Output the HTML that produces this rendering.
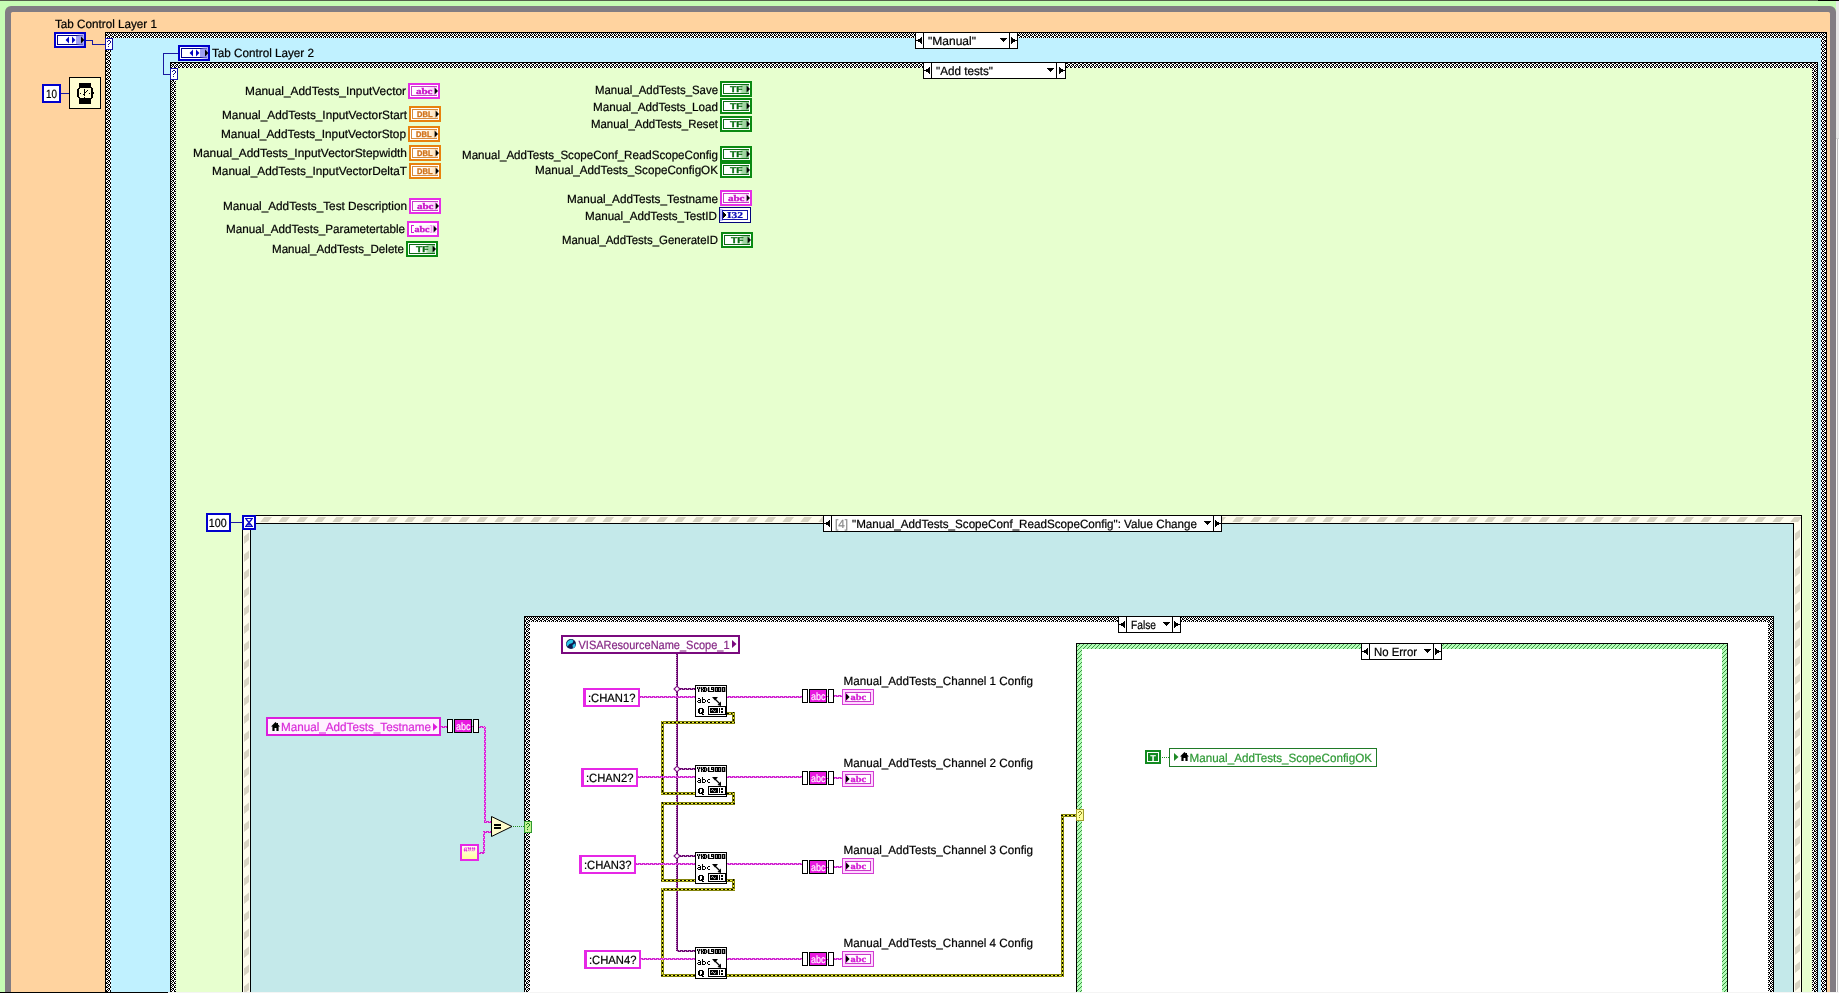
<!DOCTYPE html>
<html><head><meta charset="utf-8"><title>LabVIEW block diagram</title>
<style>
html,body{margin:0;padding:0;background:#c6fdb4;overflow:hidden}
svg{display:block;font-family:"Liberation Sans",sans-serif}
text{white-space:pre}
</style></head>
<body>
<svg width="1839" height="993" viewBox="0 0 1839 993" shape-rendering="crispEdges" text-rendering="geometricPrecision">
<defs>
<filter id="idf" x="0" y="0" width="1839" height="993" filterUnits="userSpaceOnUse" color-interpolation-filters="sRGB"><feOffset dx="0" dy="0"/></filter>
<pattern id="chk" width="4" height="4" patternUnits="userSpaceOnUse">
 <rect width="4" height="4" fill="#fff"/>
 <path d="M0 0h2v1h-2z M1 1h1v1h-1z M3 1h1v1h-1z M0 2h1v1h-1z M2 2h1v1h-1z M2 3h2v1h-2z" fill="#000"/>
</pattern>
<pattern id="evh" x="260" y="516" width="18" height="7" patternUnits="userSpaceOnUse">
 <rect width="18" height="7" fill="#fffdee"/>
 <path d="M4.3 1 L12.1 1 L8 6 L0.3 6 Z" fill="#d8d4c3" shape-rendering="geometricPrecision"/>
</pattern>
<pattern id="evv" x="243" y="532" width="7" height="18" patternUnits="userSpaceOnUse">
 <rect width="7" height="18" fill="#fffdee"/>
 <path d="M1 4.5 L6 0.5 L6 8 L1 12 Z" fill="#d8d4c3" shape-rendering="geometricPrecision"/>
</pattern>
<pattern id="evv2" x="1794" y="529" width="7" height="18" patternUnits="userSpaceOnUse">
 <rect width="7" height="18" fill="#fffdee"/>
 <path d="M1 4.5 L6 0.5 L6 8 L1 12 Z" fill="#d8d4c3" shape-rendering="geometricPrecision"/>
</pattern>
<pattern id="ghat" width="4" height="4" patternUnits="userSpaceOnUse">
 <rect width="4" height="4" fill="#b4fdb8"/>
 <path d="M-1 1 L1 -1 M-1 5 L5 -1 M3 5 L5 3" stroke="#3c9444" stroke-width="1" />
</pattern>
<linearGradient id="gB" x1="0" x2="1"><stop offset="0" stop-color="#fff"/><stop offset="0.7" stop-color="#fff"/><stop offset="0.74" stop-color="#a4a4f2"/><stop offset="1" stop-color="#9a9af0"/></linearGradient>
<linearGradient id="gB2" x1="0" x2="1"><stop offset="0" stop-color="#a0a0f0" stop-opacity="0"/><stop offset="0.5" stop-color="#a0a0f0" stop-opacity="0.55"/><stop offset="1" stop-color="#8c8cf0" stop-opacity="0.75"/></linearGradient>
<linearGradient id="gM" x1="0" x2="1"><stop offset="0" stop-color="#fff"/><stop offset="0.55" stop-color="#fff4ff"/><stop offset="1" stop-color="#ffc0ff"/></linearGradient>
<linearGradient id="gO" x1="0" x2="1"><stop offset="0" stop-color="#fff"/><stop offset="0.55" stop-color="#fffaf0"/><stop offset="1" stop-color="#ffd9a8"/></linearGradient>
<linearGradient id="gG" x1="0" x2="1"><stop offset="0" stop-color="#fff"/><stop offset="0.6" stop-color="#fff"/><stop offset="0.72" stop-color="#a8d8a8"/><stop offset="1" stop-color="#8ccc90"/></linearGradient>
<linearGradient id="gI" x1="0" x2="1"><stop offset="0" stop-color="#a8a8f8"/><stop offset="0.3" stop-color="#c8c8ff"/><stop offset="0.45" stop-color="#fff"/><stop offset="1" stop-color="#fff"/></linearGradient>
<linearGradient id="gMi" x1="0" x2="1"><stop offset="0" stop-color="#f8a0f8"/><stop offset="0.3" stop-color="#ffd0ff"/><stop offset="0.5" stop-color="#fff"/><stop offset="1" stop-color="#fff"/></linearGradient>

<pattern id="sqh" width="4" height="2" patternUnits="userSpaceOnUse">
 <rect width="4" height="2" fill="#f3a6f3"/>
 <rect x="0" y="0" width="3" height="1" fill="#cf22cf"/><rect x="2" y="1" width="2" height="1" fill="#cf22cf"/><rect x="0" y="1" width="1" height="1" fill="#cf22cf"/>
</pattern>
<pattern id="sqv" width="2" height="4" patternUnits="userSpaceOnUse">
 <rect width="2" height="4" fill="#f3a6f3"/>
 <rect x="0" y="0" width="1" height="3" fill="#d927d9"/><rect x="1" y="2" width="1" height="2" fill="#d927d9"/><rect x="1" y="0" width="1" height="1" fill="#d927d9"/>
</pattern>
<pattern id="vqh" width="4" height="2" patternUnits="userSpaceOnUse">
 <rect width="4" height="2" fill="#cfa0d2"/>
 <rect x="0" y="0" width="3" height="1" fill="#6a0870"/><rect x="2" y="1" width="2" height="1" fill="#6a0870"/><rect x="0" y="1" width="1" height="1" fill="#6a0870"/>
</pattern>
<pattern id="vqv" width="2" height="2" patternUnits="userSpaceOnUse">
 <rect x="0" y="0" width="2" height="2" fill="#6a066e"/><rect x="0" y="1" width="1" height="1" fill="#c78ec9"/>
</pattern>
<pattern id="erw" width="4" height="4" patternUnits="userSpaceOnUse">
 <rect width="4" height="4" fill="#f0f03c"/>
 <path d="M0 0h2v1h-2z M3 1h1v1h-1z M0 1h1v1h-1z M2 2h2v1h-2z M1 3h2v1h-2z" fill="#000"/>
</pattern>
<linearGradient id="gY" x1="0" x2="0" y1="0" y2="1"><stop offset="0" stop-color="#fffff2"/><stop offset="1" stop-color="#ffff9c"/></linearGradient>
</defs>
<rect x="0" y="0" width="1839" height="993" fill="#c6fdb4" />
<rect x="0" y="0" width="1839" height="1" fill="#55604c" />
<rect x="1836" y="0" width="3" height="138" fill="#e8e8e8" />
<rect x="1836" y="138" width="3" height="993" fill="#fbfbfb" />
<rect x="1836" y="138" width="3" height="1" fill="#d4d4d4" />
<rect x="1837" y="139" width="1" height="993" fill="#bcbcbc" />
<rect x="1818" y="0" width="21" height="1" fill="#000" />
<rect x="5" y="6" width="1831" height="1000" rx="6" ry="6" fill="#827d83" shape-rendering="geometricPrecision"/>
<rect x="11" y="12" width="1819" height="1000" rx="1.5" ry="1.5" fill="#ffd39f" shape-rendering="geometricPrecision"/>
<rect x="105" y="32" width="1722" height="971" fill="url(#chk)" />
<rect x="105" y="32" width="1722" height="1" fill="#000" />
<rect x="105" y="32" width="1" height="993" fill="#000" />
<rect x="1826" y="32" width="1" height="993" fill="#000" />
<rect x="111" y="38" width="1710" height="993" fill="#c0f1ff" />
<rect x="170" y="62" width="1648" height="941" fill="url(#chk)" />
<rect x="170" y="62" width="1648" height="1" fill="#000" />
<rect x="170" y="62" width="1" height="993" fill="#000" />
<rect x="1817" y="62" width="1" height="993" fill="#000" />
<rect x="176" y="68" width="1636" height="993" fill="#e7ffcf" />
<rect x="242" y="515" width="1560" height="993" fill="#000" />
<rect x="243" y="516" width="1558" height="993" fill="#fffdee" />
<rect x="243" y="516" width="1558" height="7" fill="url(#evh)" />
<rect x="243" y="523" width="7" height="993" fill="url(#evv)" />
<rect x="1794" y="523" width="7" height="993" fill="url(#evv2)" />
<rect x="250" y="523" width="1544" height="993" fill="#000" />
<rect x="251" y="524" width="1542" height="993" fill="#c4e9ea" />
<rect x="524" y="616" width="1250" height="387" fill="url(#chk)" />
<rect x="524" y="616" width="1250" height="1" fill="#000" />
<rect x="524" y="616" width="1" height="993" fill="#000" />
<rect x="1773" y="616" width="1" height="993" fill="#000" />
<rect x="530" y="622" width="1238" height="993" fill="#fff" />
<rect x="1076" y="643" width="652" height="360" fill="url(#ghat)" />
<rect x="1076" y="643" width="652" height="1" fill="#000" />
<rect x="1076" y="643" width="1" height="993" fill="#000" />
<rect x="1727" y="643" width="1" height="993" fill="#000" />
<rect x="1082" y="649" width="640" height="993" fill="#fff" />
<rect x="0" y="992" width="168" height="1" fill="#000" />
<rect x="168" y="992" width="1671" height="1" fill="#f4f4f4" />
<rect x="915" y="32" width="103" height="17" fill="#000" />
<rect x="916" y="33" width="101" height="15" fill="#fff" />
<rect x="923" y="32" width="1" height="17" fill="#000" />
<rect x="1009" y="32" width="1" height="17" fill="#000" />
<path d="M921 37h1v1h-1zM1011 37h1v1h-1zM920 38h2v1h-2zM1011 38h2v1h-2zM918 39h4v1h-4zM1011 39h4v1h-4zM916 40h6v1h-6zM1011 40h6v1h-6zM918 41h4v1h-4zM1011 41h4v1h-4zM920 42h2v1h-2zM1011 42h2v1h-2zM921 43h1v1h-1zM1011 43h1v1h-1z" fill="#000" />
<path d="M1000 38h7v1h-7zM1001 39h5v1h-5zM1002 40h3v1h-3zM1003 41h1v1h-1z" fill="#000" />
<rect x="923" y="62" width="143" height="17" fill="#000" />
<rect x="924" y="63" width="141" height="15" fill="#fff" />
<rect x="931" y="62" width="1" height="17" fill="#000" />
<rect x="1056" y="62" width="1" height="17" fill="#000" />
<path d="M929 67h1v1h-1zM1059 67h1v1h-1zM928 68h2v1h-2zM1059 68h2v1h-2zM926 69h4v1h-4zM1059 69h4v1h-4zM924 70h6v1h-6zM1059 70h6v1h-6zM926 71h4v1h-4zM1059 71h4v1h-4zM928 72h2v1h-2zM1059 72h2v1h-2zM929 73h1v1h-1zM1059 73h1v1h-1z" fill="#000" />
<path d="M1047 68h7v1h-7zM1048 69h5v1h-5zM1049 70h3v1h-3zM1050 71h1v1h-1z" fill="#000" />
<rect x="823" y="515" width="399" height="17" fill="#000" />
<rect x="824" y="516" width="397" height="15" fill="#fff" />
<rect x="831" y="515" width="1" height="17" fill="#000" />
<rect x="1213" y="515" width="1" height="17" fill="#000" />
<path d="M829 520h1v1h-1zM1215 520h1v1h-1zM828 521h2v1h-2zM1215 521h2v1h-2zM826 522h4v1h-4zM1215 522h4v1h-4zM824 523h6v1h-6zM1215 523h6v1h-6zM826 524h4v1h-4zM1215 524h4v1h-4zM828 525h2v1h-2zM1215 525h2v1h-2zM829 526h1v1h-1zM1215 526h1v1h-1z" fill="#000" />
<path d="M1204 521h7v1h-7zM1205 522h5v1h-5zM1206 523h3v1h-3zM1207 524h1v1h-1z" fill="#000" />
<rect x="1118" y="616" width="63" height="17" fill="#000" />
<rect x="1119" y="617" width="61" height="15" fill="#fff" />
<rect x="1126" y="616" width="1" height="17" fill="#000" />
<rect x="1172" y="616" width="1" height="17" fill="#000" />
<path d="M1124 621h1v1h-1zM1174 621h1v1h-1zM1123 622h2v1h-2zM1174 622h2v1h-2zM1121 623h4v1h-4zM1174 623h4v1h-4zM1119 624h6v1h-6zM1174 624h6v1h-6zM1121 625h4v1h-4zM1174 625h4v1h-4zM1123 626h2v1h-2zM1174 626h2v1h-2zM1124 627h1v1h-1zM1174 627h1v1h-1z" fill="#000" />
<path d="M1163 622h7v1h-7zM1164 623h5v1h-5zM1165 624h3v1h-3zM1166 625h1v1h-1z" fill="#000" />
<rect x="1361" y="643" width="81" height="17" fill="#000" />
<rect x="1362" y="644" width="79" height="15" fill="#fff" />
<rect x="1369" y="643" width="1" height="17" fill="#000" />
<rect x="1433" y="643" width="1" height="17" fill="#000" />
<path d="M1367 648h1v1h-1zM1435 648h1v1h-1zM1366 649h2v1h-2zM1435 649h2v1h-2zM1364 650h4v1h-4zM1435 650h4v1h-4zM1362 651h6v1h-6zM1435 651h6v1h-6zM1364 652h4v1h-4zM1435 652h4v1h-4zM1366 653h2v1h-2zM1435 653h2v1h-2zM1367 654h1v1h-1zM1435 654h1v1h-1z" fill="#000" />
<path d="M1424 649h7v1h-7zM1425 650h5v1h-5zM1426 651h3v1h-3zM1427 652h1v1h-1z" fill="#000" />
<rect x="54" y="32" width="32" height="16" fill="#0000cc" />
<rect x="56" y="34" width="28" height="12" fill="#fff" />
<rect x="57" y="35" width="26" height="10" fill="#00008a" />
<rect x="58" y="36" width="25" height="8" fill="url(#gB)" />
<rect x="76" y="34" width="8" height="12" fill="url(#gB2)" />
<path d="M65.6 40 L69 36.6 L69 43.4 Z" fill="#0000c4" shape-rendering="geometricPrecision"/>
<path d="M75.4 40 L72 36.6 L72 43.4 Z" fill="#0000c4" shape-rendering="geometricPrecision"/>
<path d="M84.3 40 L81 36.6 L81 43.4 Z" fill="#000" shape-rendering="geometricPrecision"/>
<polyline points="86.5,40.5 92.5,40.5 92.5,44.5 104.5,44.5" fill="none" stroke="#1818a0" stroke-width="1" stroke-linecap="square" />
<rect x="105" y="38" width="8" height="12" fill="#1616a8" />
<rect x="106" y="39" width="6" height="10" fill="#fff" />
<path d="M108 40h1v1h-1zM109 40h1v1h-1zM107 41h1v1h-1zM110 41h1v1h-1zM110 42h1v1h-1zM109 43h1v1h-1zM108 44h1v1h-1zM108 46h1v1h-1z" fill="#10108c" />
<rect x="178" y="45" width="32" height="16" fill="#0000cc" />
<rect x="180" y="47" width="28" height="12" fill="#fff" />
<rect x="181" y="48" width="26" height="10" fill="#00008a" />
<rect x="182" y="49" width="25" height="8" fill="url(#gB)" />
<rect x="200" y="47" width="8" height="12" fill="url(#gB2)" />
<path d="M189.6 53 L193 49.6 L193 56.4 Z" fill="#0000c4" shape-rendering="geometricPrecision"/>
<path d="M199.4 53 L196 49.6 L196 56.4 Z" fill="#0000c4" shape-rendering="geometricPrecision"/>
<path d="M208.3 53 L205 49.6 L205 56.4 Z" fill="#000" shape-rendering="geometricPrecision"/>
<polyline points="177.5,53.5 163.5,53.5 163.5,74.5 170.5,74.5" fill="none" stroke="#1818a0" stroke-width="1" stroke-linecap="square" />
<rect x="170" y="68" width="8" height="12" fill="#1616a8" />
<rect x="171" y="69" width="6" height="10" fill="#fff" />
<path d="M173 70h1v1h-1zM174 70h1v1h-1zM172 71h1v1h-1zM175 71h1v1h-1zM175 72h1v1h-1zM174 73h1v1h-1zM173 74h1v1h-1zM173 76h1v1h-1z" fill="#10108c" />
<rect x="42" y="84" width="19" height="19" fill="#0000cc" />
<rect x="44" y="86" width="15" height="15" fill="#fff" />
<polyline points="61.5,93.5 68.5,93.5" fill="none" stroke="#1818a0" stroke-width="1" stroke-linecap="square" />
<rect x="69" y="77" width="32" height="32" fill="#000" />
<rect x="70" y="78" width="30" height="30" fill="#fffdd2" />
<rect x="79" y="83" width="12" height="5" fill="#000" />
<rect x="79" y="99" width="12" height="5" fill="#000" />
<path d="M79 87 L91 87 L93 89 L93 97 L91 99 L79 99 L77 97 L77 89 Z" fill="#000" />
<path d="M80 88 L90 88 L91 89 L91 97 L90 98 L80 98 L79 97 L79 89 Z" fill="#fffdd2" />
<rect x="93" y="92" width="1" height="2" fill="#000" />
<path d="M84 89h1v7h-1z M85 92h1v1h-1z M86 91h1v1h-1z M87 90h1v1h-1z M83 94h1v1h-1z M84 97h1v1h-1z M80 93h1v1h-1z M89 93h1v1h-1z" fill="#000" />
<rect x="206" y="513" width="25" height="19" fill="#0000cc" />
<rect x="208" y="515" width="21" height="15" fill="#fff" />
<polyline points="231.5,522.5 241.5,522.5" fill="none" stroke="#1818a0" stroke-width="1" stroke-linecap="square" />
<rect x="242" y="515" width="14" height="15" fill="#0000cc" />
<rect x="244" y="517" width="10" height="11" fill="#fff" />
<path d="M245 518 h8 v1 h-8 Z M245 526 h8 v1 h-8 Z" fill="#0a0ac8" />
<path d="M246 519 L252 526 M252 519 L246 526" stroke="#0a0ac8" stroke-width="1.3" fill="none" shape-rendering="geometricPrecision"/>
<path d="M247.2 525.6 L250.8 525.6 L249 523.4 Z" fill="#0a0ac8" shape-rendering="geometricPrecision"/>
<rect x="408" y="83" width="32" height="16" fill="#e62ee6" />
<rect x="410" y="85" width="28" height="12" fill="#fff" />
<rect x="411" y="86" width="26" height="10" fill="#c83cc8" />
<rect x="412" y="87" width="25" height="8" fill="url(#gM)" />
<path d="M438 91 L434.6 87.6 L434.6 94.4 Z" fill="#000" shape-rendering="geometricPrecision"/>
<rect x="409" y="106" width="32" height="16" fill="#e8820e" />
<rect x="411" y="108" width="28" height="12" fill="#fff" />
<rect x="412" y="109" width="26" height="10" fill="#d88a3c" />
<rect x="413" y="110" width="25" height="8" fill="url(#gO)" />
<path d="M439 114 L435.6 110.6 L435.6 117.4 Z" fill="#000" shape-rendering="geometricPrecision"/>
<rect x="408" y="126" width="32" height="16" fill="#e8820e" />
<rect x="410" y="128" width="28" height="12" fill="#fff" />
<rect x="411" y="129" width="26" height="10" fill="#d88a3c" />
<rect x="412" y="130" width="25" height="8" fill="url(#gO)" />
<path d="M438 134 L434.6 130.6 L434.6 137.4 Z" fill="#000" shape-rendering="geometricPrecision"/>
<rect x="409" y="145" width="32" height="16" fill="#e8820e" />
<rect x="411" y="147" width="28" height="12" fill="#fff" />
<rect x="412" y="148" width="26" height="10" fill="#d88a3c" />
<rect x="413" y="149" width="25" height="8" fill="url(#gO)" />
<path d="M439 153 L435.6 149.6 L435.6 156.4 Z" fill="#000" shape-rendering="geometricPrecision"/>
<rect x="409" y="163" width="32" height="16" fill="#e8820e" />
<rect x="411" y="165" width="28" height="12" fill="#fff" />
<rect x="412" y="166" width="26" height="10" fill="#d88a3c" />
<rect x="413" y="167" width="25" height="8" fill="url(#gO)" />
<path d="M439 171 L435.6 167.6 L435.6 174.4 Z" fill="#000" shape-rendering="geometricPrecision"/>
<rect x="409" y="198" width="32" height="16" fill="#e62ee6" />
<rect x="411" y="200" width="28" height="12" fill="#fff" />
<rect x="412" y="201" width="26" height="10" fill="#c83cc8" />
<rect x="413" y="202" width="25" height="8" fill="url(#gM)" />
<path d="M439 206 L435.6 202.6 L435.6 209.4 Z" fill="#000" shape-rendering="geometricPrecision"/>
<rect x="407" y="221" width="32" height="16" fill="#e62ee6" />
<rect x="409" y="223" width="28" height="12" fill="#fff" />
<rect x="410" y="224" width="26" height="10" fill="#ffffff" />
<rect x="411" y="225" width="25" height="8" fill="url(#gM)" />
<path d="M437 229 L433.6 225.6 L433.6 232.4 Z" fill="#000" shape-rendering="geometricPrecision"/>
<path d="M411 225h3v1h-2v6h2v1h-3z" fill="#d418d4" />
<path d="M430 225h2v8h-2v-1h1v-6h-1z" fill="#f49cf4" />
<rect x="406" y="241" width="32" height="16" fill="#0a8a12" />
<rect x="408" y="243" width="28" height="12" fill="#fff" />
<rect x="409" y="244" width="26" height="10" fill="#0c6c14" />
<rect x="410" y="245" width="25" height="8" fill="url(#gG)" />
<path d="M436 249 L432.6 245.6 L432.6 252.4 Z" fill="#000" shape-rendering="geometricPrecision"/>
<rect x="720" y="81" width="32" height="16" fill="#0a8a12" />
<rect x="722" y="83" width="28" height="12" fill="#fff" />
<rect x="723" y="84" width="26" height="10" fill="#0c6c14" />
<rect x="724" y="85" width="25" height="8" fill="url(#gG)" />
<path d="M750 89 L746.6 85.6 L746.6 92.4 Z" fill="#000" shape-rendering="geometricPrecision"/>
<rect x="720" y="98" width="32" height="16" fill="#0a8a12" />
<rect x="722" y="100" width="28" height="12" fill="#fff" />
<rect x="723" y="101" width="26" height="10" fill="#0c6c14" />
<rect x="724" y="102" width="25" height="8" fill="url(#gG)" />
<path d="M750 106 L746.6 102.6 L746.6 109.4 Z" fill="#000" shape-rendering="geometricPrecision"/>
<rect x="720" y="116" width="32" height="16" fill="#0a8a12" />
<rect x="722" y="118" width="28" height="12" fill="#fff" />
<rect x="723" y="119" width="26" height="10" fill="#0c6c14" />
<rect x="724" y="120" width="25" height="8" fill="url(#gG)" />
<path d="M750 124 L746.6 120.6 L746.6 127.4 Z" fill="#000" shape-rendering="geometricPrecision"/>
<rect x="720" y="146" width="32" height="16" fill="#0a8a12" />
<rect x="722" y="148" width="28" height="12" fill="#fff" />
<rect x="723" y="149" width="26" height="10" fill="#0c6c14" />
<rect x="724" y="150" width="25" height="8" fill="url(#gG)" />
<path d="M750 154 L746.6 150.6 L746.6 157.4 Z" fill="#000" shape-rendering="geometricPrecision"/>
<rect x="720" y="162" width="32" height="16" fill="#0a8a12" />
<rect x="722" y="164" width="28" height="12" fill="#fff" />
<rect x="723" y="165" width="26" height="10" fill="#0c6c14" />
<rect x="724" y="166" width="25" height="8" fill="url(#gG)" />
<path d="M750 170 L746.6 166.6 L746.6 173.4 Z" fill="#000" shape-rendering="geometricPrecision"/>
<rect x="720" y="190" width="32" height="16" fill="#e62ee6" />
<rect x="722" y="192" width="28" height="12" fill="#fff" />
<rect x="723" y="193" width="26" height="10" fill="#c83cc8" />
<rect x="724" y="194" width="25" height="8" fill="url(#gM)" />
<path d="M750 198 L746.6 194.6 L746.6 201.4 Z" fill="#000" shape-rendering="geometricPrecision"/>
<rect x="719" y="207" width="32" height="16" fill="#04047c" />
<rect x="720" y="208" width="30" height="14" fill="#fff" />
<rect x="720" y="209" width="8" height="12" fill="url(#gI)" />
<rect x="722.5" y="210.5" width="25" height="9" fill="none" stroke="#1414a8" stroke-width="1"/>
<path d="M726.5 215 L723 211.6 L723 218.4 Z" fill="#000" />
<rect x="721" y="232" width="32" height="16" fill="#0a8a12" />
<rect x="723" y="234" width="28" height="12" fill="#fff" />
<rect x="724" y="235" width="26" height="10" fill="#0c6c14" />
<rect x="725" y="236" width="25" height="8" fill="url(#gG)" />
<path d="M751 240 L747.6 236.6 L747.6 243.4 Z" fill="#000" shape-rendering="geometricPrecision"/>
<rect x="266" y="717" width="175" height="19" fill="#dc1edc" />
<rect x="268" y="719" width="171" height="15" fill="#fff2ff" />
<path d="M275.5 722 L280 726.5 L278.6 726.5 L278.6 731 L276.4 731 L276.4 728 L274.6 728 L274.6 731 L272.4 731 L272.4 726.5 L271 726.5 Z" fill="#000" shape-rendering="geometricPrecision"/>
<rect x="277" y="723" width="1" height="2" fill="#000" />
<path d="M433 723 L437.5 727 L433 731 Z" fill="#dc1edc" shape-rendering="geometricPrecision"/>
<rect x="441" y="726" width="6" height="2" fill="url(#sqh)" />
<rect x="447" y="719" width="6" height="14" fill="#000" />
<rect x="448" y="720" width="4" height="12" fill="#fff" />
<rect x="454" y="719" width="18" height="14" fill="#000" />
<rect x="455" y="720" width="16" height="12" fill="#e81adf" />
<rect x="473" y="719" width="6" height="14" fill="#000" />
<rect x="474" y="720" width="4" height="12" fill="#fff" />
<rect x="472" y="726" width="1" height="1" fill="#e81adf" />
<rect x="479" y="726" width="6" height="2" fill="url(#sqh)" />
<rect x="484" y="727" width="2" height="95" fill="url(#sqv)" />
<rect x="484" y="821" width="7" height="2" fill="url(#sqh)" />
<rect x="460" y="844" width="19" height="17" fill="#e628e6" />
<rect x="462" y="846" width="15" height="13" fill="url(#gY)" />
<rect x="479" y="852" width="5" height="2" fill="url(#sqh)" />
<rect x="483" y="831" width="2" height="22" fill="url(#sqv)" />
<rect x="483" y="831" width="8" height="2" fill="url(#sqh)" />
<path d="M491.5 816.5 L512 826.5 L491.5 836.5 Z" fill="#fffbcb" stroke="#000" stroke-width="1" shape-rendering="geometricPrecision"/>
<rect x="494" y="824" width="7" height="2" fill="#000" />
<rect x="494" y="827" width="7" height="2" fill="#000" />
<rect x="513" y="826" width="1" height="1" fill="#1e8c1e" />
<rect x="515" y="826" width="1" height="1" fill="#1e8c1e" />
<rect x="517" y="826" width="1" height="1" fill="#1e8c1e" />
<rect x="519" y="826" width="1" height="1" fill="#1e8c1e" />
<rect x="521" y="826" width="1" height="1" fill="#1e8c1e" />
<rect x="523" y="826" width="1" height="1" fill="#1e8c1e" />
<rect x="524" y="821" width="8" height="12" fill="#2f9a2f" />
<rect x="525" y="822" width="6" height="10" fill="#c4f392" />
<path d="M527 823h1v1h-1zM528 823h1v1h-1zM526 824h1v1h-1zM529 824h1v1h-1zM529 825h1v1h-1zM528 826h1v1h-1zM527 827h1v1h-1zM527 829h1v1h-1z" fill="#1b861b" />
<rect x="561" y="635" width="179" height="19" fill="#7a0a7e" />
<rect x="563" y="637" width="175" height="15" fill="#fff" />
<circle cx="571" cy="644" r="5" fill="#0c1c50" shape-rendering="geometricPrecision"/>
<path d="M568 641 l3 -1.5 l2.5 1 l-1 2.5 l-3 1 l-2 2.5 l-1.2 -2.5 Z M572.5 645 l2.8 -1.8 l0.2 3 l-2.5 2.2 Z" fill="#2cc7e8" shape-rendering="geometricPrecision"/>
<path d="M732 640 L736.5 644 L732 648 Z" fill="#7a0a7e" shape-rendering="geometricPrecision"/>
<rect x="676" y="654" width="2" height="297" fill="url(#vqv)" />
<rect x="727" y="712" width="8" height="3" fill="#83830a" />
<rect x="727" y="713" width="8" height="1" fill="url(#erw)" />
<rect x="732" y="712" width="3" height="12" fill="#83830a" />
<rect x="733" y="712" width="1" height="12" fill="url(#erw)" />
<rect x="661" y="721" width="74" height="3" fill="#83830a" />
<rect x="661" y="722" width="74" height="1" fill="url(#erw)" />
<rect x="583" y="688" width="57" height="19" fill="#e628e6" />
<rect x="586" y="690" width="52" height="15" fill="#fff" />
<rect x="640" y="696" width="55" height="2" fill="url(#sqh)" />
<rect x="727" y="696" width="75" height="2" fill="url(#sqh)" />
<rect x="678" y="688" width="17" height="2" fill="url(#vqh)" />
<path d="M677 686.2 L680 689 L677 691.8 L674 689 Z" fill="#fff" stroke="#7c0c80" stroke-width="1.1" shape-rendering="geometricPrecision"/>
<rect x="695" y="685" width="32" height="32" fill="#000" />
<rect x="696" y="686" width="30" height="30" fill="#fff" />
<path d="M697 687h1.35v1h-1.35zM699 687h1.35v1h-1.35zM697 688h1.35v1h-1.35zM699 688h1.35v1h-1.35zM698 689h1.35v1h-1.35zM698 690h1.35v1h-1.35zM698 691h1.35v1h-1.35z" fill="#000" shape-rendering="geometricPrecision"/>
<path d="M701 687h1.35v1h-1.35zM703 687h1.35v1h-1.35zM701 688h1.35v1h-1.35zM703 688h1.35v1h-1.35zM701 689h1.35v1h-1.35zM702 689h1.35v1h-1.35zM701 690h1.35v1h-1.35zM703 690h1.35v1h-1.35zM701 691h1.35v1h-1.35zM703 691h1.35v1h-1.35z" fill="#000" shape-rendering="geometricPrecision"/>
<path d="M704 687h1.35v1h-1.35zM705 687h1.35v1h-1.35zM704 688h1.35v1h-1.35zM706 688h1.35v1h-1.35zM704 689h1.35v1h-1.35zM706 689h1.35v1h-1.35zM704 690h1.35v1h-1.35zM706 690h1.35v1h-1.35zM704 691h1.35v1h-1.35zM705 691h1.35v1h-1.35z" fill="#000" shape-rendering="geometricPrecision"/>
<path d="M708 687h1.35v1h-1.35zM708 688h1.35v1h-1.35zM708 689h1.35v1h-1.35zM708 690h1.35v1h-1.35zM708 691h1.35v1h-1.35zM709 691h1.35v1h-1.35zM710 691h1.35v1h-1.35z" fill="#000" shape-rendering="geometricPrecision"/>
<path d="M711 687h1.35v1h-1.35zM712 687h1.35v1h-1.35zM713 687h1.35v1h-1.35zM711 688h1.35v1h-1.35zM713 688h1.35v1h-1.35zM711 689h1.35v1h-1.35zM712 689h1.35v1h-1.35zM713 689h1.35v1h-1.35zM713 690h1.35v1h-1.35zM711 691h1.35v1h-1.35zM712 691h1.35v1h-1.35zM713 691h1.35v1h-1.35z" fill="#000" shape-rendering="geometricPrecision"/>
<path d="M715 687h1.35v1h-1.35zM716 687h1.35v1h-1.35zM717 687h1.35v1h-1.35zM715 688h1.35v1h-1.35zM717 688h1.35v1h-1.35zM715 689h1.35v1h-1.35zM717 689h1.35v1h-1.35zM715 690h1.35v1h-1.35zM717 690h1.35v1h-1.35zM715 691h1.35v1h-1.35zM716 691h1.35v1h-1.35zM717 691h1.35v1h-1.35z" fill="#000" shape-rendering="geometricPrecision"/>
<path d="M718 687h1.35v1h-1.35zM719 687h1.35v1h-1.35zM720 687h1.35v1h-1.35zM718 688h1.35v1h-1.35zM720 688h1.35v1h-1.35zM718 689h1.35v1h-1.35zM720 689h1.35v1h-1.35zM718 690h1.35v1h-1.35zM720 690h1.35v1h-1.35zM718 691h1.35v1h-1.35zM719 691h1.35v1h-1.35zM720 691h1.35v1h-1.35z" fill="#000" shape-rendering="geometricPrecision"/>
<path d="M722 687h1.35v1h-1.35zM723 687h1.35v1h-1.35zM724 687h1.35v1h-1.35zM722 688h1.35v1h-1.35zM724 688h1.35v1h-1.35zM722 689h1.35v1h-1.35zM724 689h1.35v1h-1.35zM722 690h1.35v1h-1.35zM724 690h1.35v1h-1.35zM722 691h1.35v1h-1.35zM723 691h1.35v1h-1.35zM724 691h1.35v1h-1.35z" fill="#000" shape-rendering="geometricPrecision"/>
<path d="M698 698h1v1h-1zM699 698h1v1h-1zM700 699h1v1h-1zM698 700h1v1h-1zM699 700h1v1h-1zM700 700h1v1h-1zM697 701h1v1h-1zM700 701h1v1h-1zM698 702h1v1h-1zM699 702h1v1h-1zM700 702h1v1h-1z" fill="#000" />
<path d="M702 697h1v1h-1zM702 698h1v1h-1zM702 699h1v1h-1zM703 699h1v1h-1zM704 699h1v1h-1zM702 700h1v1h-1zM705 700h1v1h-1zM702 701h1v1h-1zM705 701h1v1h-1zM702 702h1v1h-1zM703 702h1v1h-1zM704 702h1v1h-1z" fill="#000" />
<path d="M708 699h1v1h-1zM709 699h1v1h-1zM707 700h1v1h-1zM707 701h1v1h-1zM708 702h1v1h-1zM709 702h1v1h-1z" fill="#000" />
<path d="M712 697 L718 697 L715 700.5 Z" fill="#000" shape-rendering="geometricPrecision"/>
<path d="M715 699 L720.5 704.5" stroke="#000" stroke-width="1.2" fill="none" shape-rendering="geometricPrecision"/>
<path d="M721 706 L721 701.5 L717.5 705 Z" fill="#000" shape-rendering="geometricPrecision"/>
<path d="M699 708h1v1h-1zM700 708h1v1h-1zM701 708h1v1h-1zM702 708h1v1h-1zM698 709h1v1h-1zM699 709h1v1h-1zM702 709h1v1h-1zM703 709h1v1h-1zM698 710h1v1h-1zM699 710h1v1h-1zM702 710h1v1h-1zM703 710h1v1h-1zM698 711h1v1h-1zM699 711h1v1h-1zM702 711h1v1h-1zM703 711h1v1h-1zM698 712h1v1h-1zM699 712h1v1h-1zM701 712h1v1h-1zM702 712h1v1h-1zM703 712h1v1h-1zM699 713h1v1h-1zM700 713h1v1h-1zM701 713h1v1h-1zM702 713h1v1h-1zM702 714h1v1h-1zM703 714h1v1h-1z" fill="#000" />
<rect x="708.5" y="706.5" width="17" height="8" fill="#fff" stroke="#000" stroke-width="1"/>
<rect x="710" y="708" width="8" height="5" fill="#000" />
<path d="M711.3 710.6 q1.1 -2 2.2 0 t2.2 0" stroke="#fff" stroke-width="1" fill="none" shape-rendering="geometricPrecision"/>
<rect x="719" y="708" width="1" height="5" fill="#000" />
<rect x="721" y="708" width="2" height="2" fill="#000" />
<rect x="721" y="711" width="2" height="2" fill="#000" />
<rect x="802" y="689" width="6" height="14" fill="#000" />
<rect x="803" y="690" width="4" height="12" fill="#fff" />
<rect x="809" y="689" width="18" height="14" fill="#000" />
<rect x="810" y="690" width="16" height="12" fill="#e81adf" />
<rect x="828" y="689" width="6" height="14" fill="#000" />
<rect x="829" y="690" width="4" height="12" fill="#fff" />
<rect x="827" y="696" width="1" height="1" fill="#e81adf" />
<rect x="834" y="695" width="8" height="2" fill="url(#sqh)" />
<rect x="842" y="689" width="32" height="16" fill="#d23cd2" />
<rect x="843" y="690" width="30" height="14" fill="#ffd9ff" />
<rect x="845" y="692" width="26" height="10" fill="#fff" />
<rect x="845" y="692" width="8" height="10" fill="url(#gMi)" />
<rect x="845.5" y="692.5" width="25" height="9" fill="none" stroke="#c83ac8" stroke-width="1"/>
<path d="M849.6 697 L846 693.6 L846 700.4 Z" fill="#000" shape-rendering="geometricPrecision"/>
<rect x="661" y="721" width="3" height="74" fill="#83830a" />
<rect x="662" y="721" width="1" height="74" fill="url(#erw)" />
<rect x="661" y="792" width="34" height="3" fill="#83830a" />
<rect x="661" y="793" width="34" height="1" fill="url(#erw)" />
<rect x="727" y="792" width="8" height="3" fill="#83830a" />
<rect x="727" y="793" width="8" height="1" fill="url(#erw)" />
<rect x="732" y="792" width="3" height="13" fill="#83830a" />
<rect x="733" y="792" width="1" height="13" fill="url(#erw)" />
<rect x="661" y="802" width="74" height="3" fill="#83830a" />
<rect x="661" y="803" width="74" height="1" fill="url(#erw)" />
<rect x="581" y="768" width="57" height="19" fill="#e628e6" />
<rect x="584" y="770" width="52" height="15" fill="#fff" />
<rect x="638" y="776" width="57" height="2" fill="url(#sqh)" />
<rect x="727" y="776" width="75" height="2" fill="url(#sqh)" />
<rect x="678" y="768" width="17" height="2" fill="url(#vqh)" />
<path d="M677 766.2 L680 769 L677 771.8 L674 769 Z" fill="#fff" stroke="#7c0c80" stroke-width="1.1" shape-rendering="geometricPrecision"/>
<rect x="695" y="765" width="32" height="32" fill="#000" />
<rect x="696" y="766" width="30" height="30" fill="#fff" />
<path d="M697 767h1.35v1h-1.35zM699 767h1.35v1h-1.35zM697 768h1.35v1h-1.35zM699 768h1.35v1h-1.35zM698 769h1.35v1h-1.35zM698 770h1.35v1h-1.35zM698 771h1.35v1h-1.35z" fill="#000" shape-rendering="geometricPrecision"/>
<path d="M701 767h1.35v1h-1.35zM703 767h1.35v1h-1.35zM701 768h1.35v1h-1.35zM703 768h1.35v1h-1.35zM701 769h1.35v1h-1.35zM702 769h1.35v1h-1.35zM701 770h1.35v1h-1.35zM703 770h1.35v1h-1.35zM701 771h1.35v1h-1.35zM703 771h1.35v1h-1.35z" fill="#000" shape-rendering="geometricPrecision"/>
<path d="M704 767h1.35v1h-1.35zM705 767h1.35v1h-1.35zM704 768h1.35v1h-1.35zM706 768h1.35v1h-1.35zM704 769h1.35v1h-1.35zM706 769h1.35v1h-1.35zM704 770h1.35v1h-1.35zM706 770h1.35v1h-1.35zM704 771h1.35v1h-1.35zM705 771h1.35v1h-1.35z" fill="#000" shape-rendering="geometricPrecision"/>
<path d="M708 767h1.35v1h-1.35zM708 768h1.35v1h-1.35zM708 769h1.35v1h-1.35zM708 770h1.35v1h-1.35zM708 771h1.35v1h-1.35zM709 771h1.35v1h-1.35zM710 771h1.35v1h-1.35z" fill="#000" shape-rendering="geometricPrecision"/>
<path d="M711 767h1.35v1h-1.35zM712 767h1.35v1h-1.35zM713 767h1.35v1h-1.35zM711 768h1.35v1h-1.35zM713 768h1.35v1h-1.35zM711 769h1.35v1h-1.35zM712 769h1.35v1h-1.35zM713 769h1.35v1h-1.35zM713 770h1.35v1h-1.35zM711 771h1.35v1h-1.35zM712 771h1.35v1h-1.35zM713 771h1.35v1h-1.35z" fill="#000" shape-rendering="geometricPrecision"/>
<path d="M715 767h1.35v1h-1.35zM716 767h1.35v1h-1.35zM717 767h1.35v1h-1.35zM715 768h1.35v1h-1.35zM717 768h1.35v1h-1.35zM715 769h1.35v1h-1.35zM717 769h1.35v1h-1.35zM715 770h1.35v1h-1.35zM717 770h1.35v1h-1.35zM715 771h1.35v1h-1.35zM716 771h1.35v1h-1.35zM717 771h1.35v1h-1.35z" fill="#000" shape-rendering="geometricPrecision"/>
<path d="M718 767h1.35v1h-1.35zM719 767h1.35v1h-1.35zM720 767h1.35v1h-1.35zM718 768h1.35v1h-1.35zM720 768h1.35v1h-1.35zM718 769h1.35v1h-1.35zM720 769h1.35v1h-1.35zM718 770h1.35v1h-1.35zM720 770h1.35v1h-1.35zM718 771h1.35v1h-1.35zM719 771h1.35v1h-1.35zM720 771h1.35v1h-1.35z" fill="#000" shape-rendering="geometricPrecision"/>
<path d="M722 767h1.35v1h-1.35zM723 767h1.35v1h-1.35zM724 767h1.35v1h-1.35zM722 768h1.35v1h-1.35zM724 768h1.35v1h-1.35zM722 769h1.35v1h-1.35zM724 769h1.35v1h-1.35zM722 770h1.35v1h-1.35zM724 770h1.35v1h-1.35zM722 771h1.35v1h-1.35zM723 771h1.35v1h-1.35zM724 771h1.35v1h-1.35z" fill="#000" shape-rendering="geometricPrecision"/>
<path d="M698 778h1v1h-1zM699 778h1v1h-1zM700 779h1v1h-1zM698 780h1v1h-1zM699 780h1v1h-1zM700 780h1v1h-1zM697 781h1v1h-1zM700 781h1v1h-1zM698 782h1v1h-1zM699 782h1v1h-1zM700 782h1v1h-1z" fill="#000" />
<path d="M702 777h1v1h-1zM702 778h1v1h-1zM702 779h1v1h-1zM703 779h1v1h-1zM704 779h1v1h-1zM702 780h1v1h-1zM705 780h1v1h-1zM702 781h1v1h-1zM705 781h1v1h-1zM702 782h1v1h-1zM703 782h1v1h-1zM704 782h1v1h-1z" fill="#000" />
<path d="M708 779h1v1h-1zM709 779h1v1h-1zM707 780h1v1h-1zM707 781h1v1h-1zM708 782h1v1h-1zM709 782h1v1h-1z" fill="#000" />
<path d="M712 777 L718 777 L715 780.5 Z" fill="#000" shape-rendering="geometricPrecision"/>
<path d="M715 779 L720.5 784.5" stroke="#000" stroke-width="1.2" fill="none" shape-rendering="geometricPrecision"/>
<path d="M721 786 L721 781.5 L717.5 785 Z" fill="#000" shape-rendering="geometricPrecision"/>
<path d="M699 788h1v1h-1zM700 788h1v1h-1zM701 788h1v1h-1zM702 788h1v1h-1zM698 789h1v1h-1zM699 789h1v1h-1zM702 789h1v1h-1zM703 789h1v1h-1zM698 790h1v1h-1zM699 790h1v1h-1zM702 790h1v1h-1zM703 790h1v1h-1zM698 791h1v1h-1zM699 791h1v1h-1zM702 791h1v1h-1zM703 791h1v1h-1zM698 792h1v1h-1zM699 792h1v1h-1zM701 792h1v1h-1zM702 792h1v1h-1zM703 792h1v1h-1zM699 793h1v1h-1zM700 793h1v1h-1zM701 793h1v1h-1zM702 793h1v1h-1zM702 794h1v1h-1zM703 794h1v1h-1z" fill="#000" />
<rect x="708.5" y="786.5" width="17" height="8" fill="#fff" stroke="#000" stroke-width="1"/>
<rect x="710" y="788" width="8" height="5" fill="#000" />
<path d="M711.3 790.6 q1.1 -2 2.2 0 t2.2 0" stroke="#fff" stroke-width="1" fill="none" shape-rendering="geometricPrecision"/>
<rect x="719" y="788" width="1" height="5" fill="#000" />
<rect x="721" y="788" width="2" height="2" fill="#000" />
<rect x="721" y="791" width="2" height="2" fill="#000" />
<rect x="802" y="771" width="6" height="14" fill="#000" />
<rect x="803" y="772" width="4" height="12" fill="#fff" />
<rect x="809" y="771" width="18" height="14" fill="#000" />
<rect x="810" y="772" width="16" height="12" fill="#e81adf" />
<rect x="828" y="771" width="6" height="14" fill="#000" />
<rect x="829" y="772" width="4" height="12" fill="#fff" />
<rect x="827" y="778" width="1" height="1" fill="#e81adf" />
<rect x="834" y="777" width="8" height="2" fill="url(#sqh)" />
<rect x="842" y="771" width="32" height="16" fill="#d23cd2" />
<rect x="843" y="772" width="30" height="14" fill="#ffd9ff" />
<rect x="845" y="774" width="26" height="10" fill="#fff" />
<rect x="845" y="774" width="8" height="10" fill="url(#gMi)" />
<rect x="845.5" y="774.5" width="25" height="9" fill="none" stroke="#c83ac8" stroke-width="1"/>
<path d="M849.6 779 L846 775.6 L846 782.4 Z" fill="#000" shape-rendering="geometricPrecision"/>
<rect x="661" y="802" width="3" height="80" fill="#83830a" />
<rect x="662" y="802" width="1" height="80" fill="url(#erw)" />
<rect x="661" y="879" width="34" height="3" fill="#83830a" />
<rect x="661" y="880" width="34" height="1" fill="url(#erw)" />
<rect x="727" y="879" width="8" height="3" fill="#83830a" />
<rect x="727" y="880" width="8" height="1" fill="url(#erw)" />
<rect x="732" y="879" width="3" height="12" fill="#83830a" />
<rect x="733" y="879" width="1" height="12" fill="url(#erw)" />
<rect x="661" y="888" width="74" height="3" fill="#83830a" />
<rect x="661" y="889" width="74" height="1" fill="url(#erw)" />
<rect x="579" y="855" width="57" height="19" fill="#e628e6" />
<rect x="582" y="857" width="52" height="15" fill="#fff" />
<rect x="636" y="863" width="59" height="2" fill="url(#sqh)" />
<rect x="727" y="863" width="75" height="2" fill="url(#sqh)" />
<rect x="678" y="855" width="17" height="2" fill="url(#vqh)" />
<path d="M677 853.2 L680 856 L677 858.8 L674 856 Z" fill="#fff" stroke="#7c0c80" stroke-width="1.1" shape-rendering="geometricPrecision"/>
<rect x="695" y="852" width="32" height="32" fill="#000" />
<rect x="696" y="853" width="30" height="30" fill="#fff" />
<path d="M697 854h1.35v1h-1.35zM699 854h1.35v1h-1.35zM697 855h1.35v1h-1.35zM699 855h1.35v1h-1.35zM698 856h1.35v1h-1.35zM698 857h1.35v1h-1.35zM698 858h1.35v1h-1.35z" fill="#000" shape-rendering="geometricPrecision"/>
<path d="M701 854h1.35v1h-1.35zM703 854h1.35v1h-1.35zM701 855h1.35v1h-1.35zM703 855h1.35v1h-1.35zM701 856h1.35v1h-1.35zM702 856h1.35v1h-1.35zM701 857h1.35v1h-1.35zM703 857h1.35v1h-1.35zM701 858h1.35v1h-1.35zM703 858h1.35v1h-1.35z" fill="#000" shape-rendering="geometricPrecision"/>
<path d="M704 854h1.35v1h-1.35zM705 854h1.35v1h-1.35zM704 855h1.35v1h-1.35zM706 855h1.35v1h-1.35zM704 856h1.35v1h-1.35zM706 856h1.35v1h-1.35zM704 857h1.35v1h-1.35zM706 857h1.35v1h-1.35zM704 858h1.35v1h-1.35zM705 858h1.35v1h-1.35z" fill="#000" shape-rendering="geometricPrecision"/>
<path d="M708 854h1.35v1h-1.35zM708 855h1.35v1h-1.35zM708 856h1.35v1h-1.35zM708 857h1.35v1h-1.35zM708 858h1.35v1h-1.35zM709 858h1.35v1h-1.35zM710 858h1.35v1h-1.35z" fill="#000" shape-rendering="geometricPrecision"/>
<path d="M711 854h1.35v1h-1.35zM712 854h1.35v1h-1.35zM713 854h1.35v1h-1.35zM711 855h1.35v1h-1.35zM713 855h1.35v1h-1.35zM711 856h1.35v1h-1.35zM712 856h1.35v1h-1.35zM713 856h1.35v1h-1.35zM713 857h1.35v1h-1.35zM711 858h1.35v1h-1.35zM712 858h1.35v1h-1.35zM713 858h1.35v1h-1.35z" fill="#000" shape-rendering="geometricPrecision"/>
<path d="M715 854h1.35v1h-1.35zM716 854h1.35v1h-1.35zM717 854h1.35v1h-1.35zM715 855h1.35v1h-1.35zM717 855h1.35v1h-1.35zM715 856h1.35v1h-1.35zM717 856h1.35v1h-1.35zM715 857h1.35v1h-1.35zM717 857h1.35v1h-1.35zM715 858h1.35v1h-1.35zM716 858h1.35v1h-1.35zM717 858h1.35v1h-1.35z" fill="#000" shape-rendering="geometricPrecision"/>
<path d="M718 854h1.35v1h-1.35zM719 854h1.35v1h-1.35zM720 854h1.35v1h-1.35zM718 855h1.35v1h-1.35zM720 855h1.35v1h-1.35zM718 856h1.35v1h-1.35zM720 856h1.35v1h-1.35zM718 857h1.35v1h-1.35zM720 857h1.35v1h-1.35zM718 858h1.35v1h-1.35zM719 858h1.35v1h-1.35zM720 858h1.35v1h-1.35z" fill="#000" shape-rendering="geometricPrecision"/>
<path d="M722 854h1.35v1h-1.35zM723 854h1.35v1h-1.35zM724 854h1.35v1h-1.35zM722 855h1.35v1h-1.35zM724 855h1.35v1h-1.35zM722 856h1.35v1h-1.35zM724 856h1.35v1h-1.35zM722 857h1.35v1h-1.35zM724 857h1.35v1h-1.35zM722 858h1.35v1h-1.35zM723 858h1.35v1h-1.35zM724 858h1.35v1h-1.35z" fill="#000" shape-rendering="geometricPrecision"/>
<path d="M698 865h1v1h-1zM699 865h1v1h-1zM700 866h1v1h-1zM698 867h1v1h-1zM699 867h1v1h-1zM700 867h1v1h-1zM697 868h1v1h-1zM700 868h1v1h-1zM698 869h1v1h-1zM699 869h1v1h-1zM700 869h1v1h-1z" fill="#000" />
<path d="M702 864h1v1h-1zM702 865h1v1h-1zM702 866h1v1h-1zM703 866h1v1h-1zM704 866h1v1h-1zM702 867h1v1h-1zM705 867h1v1h-1zM702 868h1v1h-1zM705 868h1v1h-1zM702 869h1v1h-1zM703 869h1v1h-1zM704 869h1v1h-1z" fill="#000" />
<path d="M708 866h1v1h-1zM709 866h1v1h-1zM707 867h1v1h-1zM707 868h1v1h-1zM708 869h1v1h-1zM709 869h1v1h-1z" fill="#000" />
<path d="M712 864 L718 864 L715 867.5 Z" fill="#000" shape-rendering="geometricPrecision"/>
<path d="M715 866 L720.5 871.5" stroke="#000" stroke-width="1.2" fill="none" shape-rendering="geometricPrecision"/>
<path d="M721 873 L721 868.5 L717.5 872 Z" fill="#000" shape-rendering="geometricPrecision"/>
<path d="M699 875h1v1h-1zM700 875h1v1h-1zM701 875h1v1h-1zM702 875h1v1h-1zM698 876h1v1h-1zM699 876h1v1h-1zM702 876h1v1h-1zM703 876h1v1h-1zM698 877h1v1h-1zM699 877h1v1h-1zM702 877h1v1h-1zM703 877h1v1h-1zM698 878h1v1h-1zM699 878h1v1h-1zM702 878h1v1h-1zM703 878h1v1h-1zM698 879h1v1h-1zM699 879h1v1h-1zM701 879h1v1h-1zM702 879h1v1h-1zM703 879h1v1h-1zM699 880h1v1h-1zM700 880h1v1h-1zM701 880h1v1h-1zM702 880h1v1h-1zM702 881h1v1h-1zM703 881h1v1h-1z" fill="#000" />
<rect x="708.5" y="873.5" width="17" height="8" fill="#fff" stroke="#000" stroke-width="1"/>
<rect x="710" y="875" width="8" height="5" fill="#000" />
<path d="M711.3 877.6 q1.1 -2 2.2 0 t2.2 0" stroke="#fff" stroke-width="1" fill="none" shape-rendering="geometricPrecision"/>
<rect x="719" y="875" width="1" height="5" fill="#000" />
<rect x="721" y="875" width="2" height="2" fill="#000" />
<rect x="721" y="878" width="2" height="2" fill="#000" />
<rect x="802" y="860" width="6" height="14" fill="#000" />
<rect x="803" y="861" width="4" height="12" fill="#fff" />
<rect x="809" y="860" width="18" height="14" fill="#000" />
<rect x="810" y="861" width="16" height="12" fill="#e81adf" />
<rect x="828" y="860" width="6" height="14" fill="#000" />
<rect x="829" y="861" width="4" height="12" fill="#fff" />
<rect x="827" y="867" width="1" height="1" fill="#e81adf" />
<rect x="834" y="866" width="8" height="2" fill="url(#sqh)" />
<rect x="842" y="858" width="32" height="16" fill="#d23cd2" />
<rect x="843" y="859" width="30" height="14" fill="#ffd9ff" />
<rect x="845" y="861" width="26" height="10" fill="#fff" />
<rect x="845" y="861" width="8" height="10" fill="url(#gMi)" />
<rect x="845.5" y="861.5" width="25" height="9" fill="none" stroke="#c83ac8" stroke-width="1"/>
<path d="M849.6 866 L846 862.6 L846 869.4 Z" fill="#000" shape-rendering="geometricPrecision"/>
<rect x="661" y="888" width="3" height="89" fill="#83830a" />
<rect x="662" y="888" width="1" height="89" fill="url(#erw)" />
<rect x="661" y="974" width="34" height="3" fill="#83830a" />
<rect x="661" y="975" width="34" height="1" fill="url(#erw)" />
<rect x="727" y="974" width="337" height="3" fill="#83830a" />
<rect x="727" y="975" width="337" height="1" fill="url(#erw)" />
<rect x="1061" y="814" width="3" height="163" fill="#83830a" />
<rect x="1062" y="814" width="1" height="163" fill="url(#erw)" />
<rect x="1061" y="814" width="15" height="3" fill="#83830a" />
<rect x="1061" y="815" width="15" height="1" fill="url(#erw)" />
<rect x="584" y="950" width="57" height="19" fill="#e628e6" />
<rect x="587" y="952" width="52" height="15" fill="#fff" />
<rect x="641" y="958" width="54" height="2" fill="url(#sqh)" />
<rect x="727" y="958" width="75" height="2" fill="url(#sqh)" />
<rect x="677" y="950" width="18" height="2" fill="url(#vqh)" />
<rect x="695" y="947" width="32" height="32" fill="#000" />
<rect x="696" y="948" width="30" height="30" fill="#fff" />
<path d="M697 949h1.35v1h-1.35zM699 949h1.35v1h-1.35zM697 950h1.35v1h-1.35zM699 950h1.35v1h-1.35zM698 951h1.35v1h-1.35zM698 952h1.35v1h-1.35zM698 953h1.35v1h-1.35z" fill="#000" shape-rendering="geometricPrecision"/>
<path d="M701 949h1.35v1h-1.35zM703 949h1.35v1h-1.35zM701 950h1.35v1h-1.35zM703 950h1.35v1h-1.35zM701 951h1.35v1h-1.35zM702 951h1.35v1h-1.35zM701 952h1.35v1h-1.35zM703 952h1.35v1h-1.35zM701 953h1.35v1h-1.35zM703 953h1.35v1h-1.35z" fill="#000" shape-rendering="geometricPrecision"/>
<path d="M704 949h1.35v1h-1.35zM705 949h1.35v1h-1.35zM704 950h1.35v1h-1.35zM706 950h1.35v1h-1.35zM704 951h1.35v1h-1.35zM706 951h1.35v1h-1.35zM704 952h1.35v1h-1.35zM706 952h1.35v1h-1.35zM704 953h1.35v1h-1.35zM705 953h1.35v1h-1.35z" fill="#000" shape-rendering="geometricPrecision"/>
<path d="M708 949h1.35v1h-1.35zM708 950h1.35v1h-1.35zM708 951h1.35v1h-1.35zM708 952h1.35v1h-1.35zM708 953h1.35v1h-1.35zM709 953h1.35v1h-1.35zM710 953h1.35v1h-1.35z" fill="#000" shape-rendering="geometricPrecision"/>
<path d="M711 949h1.35v1h-1.35zM712 949h1.35v1h-1.35zM713 949h1.35v1h-1.35zM711 950h1.35v1h-1.35zM713 950h1.35v1h-1.35zM711 951h1.35v1h-1.35zM712 951h1.35v1h-1.35zM713 951h1.35v1h-1.35zM713 952h1.35v1h-1.35zM711 953h1.35v1h-1.35zM712 953h1.35v1h-1.35zM713 953h1.35v1h-1.35z" fill="#000" shape-rendering="geometricPrecision"/>
<path d="M715 949h1.35v1h-1.35zM716 949h1.35v1h-1.35zM717 949h1.35v1h-1.35zM715 950h1.35v1h-1.35zM717 950h1.35v1h-1.35zM715 951h1.35v1h-1.35zM717 951h1.35v1h-1.35zM715 952h1.35v1h-1.35zM717 952h1.35v1h-1.35zM715 953h1.35v1h-1.35zM716 953h1.35v1h-1.35zM717 953h1.35v1h-1.35z" fill="#000" shape-rendering="geometricPrecision"/>
<path d="M718 949h1.35v1h-1.35zM719 949h1.35v1h-1.35zM720 949h1.35v1h-1.35zM718 950h1.35v1h-1.35zM720 950h1.35v1h-1.35zM718 951h1.35v1h-1.35zM720 951h1.35v1h-1.35zM718 952h1.35v1h-1.35zM720 952h1.35v1h-1.35zM718 953h1.35v1h-1.35zM719 953h1.35v1h-1.35zM720 953h1.35v1h-1.35z" fill="#000" shape-rendering="geometricPrecision"/>
<path d="M722 949h1.35v1h-1.35zM723 949h1.35v1h-1.35zM724 949h1.35v1h-1.35zM722 950h1.35v1h-1.35zM724 950h1.35v1h-1.35zM722 951h1.35v1h-1.35zM724 951h1.35v1h-1.35zM722 952h1.35v1h-1.35zM724 952h1.35v1h-1.35zM722 953h1.35v1h-1.35zM723 953h1.35v1h-1.35zM724 953h1.35v1h-1.35z" fill="#000" shape-rendering="geometricPrecision"/>
<path d="M698 960h1v1h-1zM699 960h1v1h-1zM700 961h1v1h-1zM698 962h1v1h-1zM699 962h1v1h-1zM700 962h1v1h-1zM697 963h1v1h-1zM700 963h1v1h-1zM698 964h1v1h-1zM699 964h1v1h-1zM700 964h1v1h-1z" fill="#000" />
<path d="M702 959h1v1h-1zM702 960h1v1h-1zM702 961h1v1h-1zM703 961h1v1h-1zM704 961h1v1h-1zM702 962h1v1h-1zM705 962h1v1h-1zM702 963h1v1h-1zM705 963h1v1h-1zM702 964h1v1h-1zM703 964h1v1h-1zM704 964h1v1h-1z" fill="#000" />
<path d="M708 961h1v1h-1zM709 961h1v1h-1zM707 962h1v1h-1zM707 963h1v1h-1zM708 964h1v1h-1zM709 964h1v1h-1z" fill="#000" />
<path d="M712 959 L718 959 L715 962.5 Z" fill="#000" shape-rendering="geometricPrecision"/>
<path d="M715 961 L720.5 966.5" stroke="#000" stroke-width="1.2" fill="none" shape-rendering="geometricPrecision"/>
<path d="M721 968 L721 963.5 L717.5 967 Z" fill="#000" shape-rendering="geometricPrecision"/>
<path d="M699 970h1v1h-1zM700 970h1v1h-1zM701 970h1v1h-1zM702 970h1v1h-1zM698 971h1v1h-1zM699 971h1v1h-1zM702 971h1v1h-1zM703 971h1v1h-1zM698 972h1v1h-1zM699 972h1v1h-1zM702 972h1v1h-1zM703 972h1v1h-1zM698 973h1v1h-1zM699 973h1v1h-1zM702 973h1v1h-1zM703 973h1v1h-1zM698 974h1v1h-1zM699 974h1v1h-1zM701 974h1v1h-1zM702 974h1v1h-1zM703 974h1v1h-1zM699 975h1v1h-1zM700 975h1v1h-1zM701 975h1v1h-1zM702 975h1v1h-1zM702 976h1v1h-1zM703 976h1v1h-1z" fill="#000" />
<rect x="708.5" y="968.5" width="17" height="8" fill="#fff" stroke="#000" stroke-width="1"/>
<rect x="710" y="970" width="8" height="5" fill="#000" />
<path d="M711.3 972.6 q1.1 -2 2.2 0 t2.2 0" stroke="#fff" stroke-width="1" fill="none" shape-rendering="geometricPrecision"/>
<rect x="719" y="970" width="1" height="5" fill="#000" />
<rect x="721" y="970" width="2" height="2" fill="#000" />
<rect x="721" y="973" width="2" height="2" fill="#000" />
<rect x="802" y="952" width="6" height="14" fill="#000" />
<rect x="803" y="953" width="4" height="12" fill="#fff" />
<rect x="809" y="952" width="18" height="14" fill="#000" />
<rect x="810" y="953" width="16" height="12" fill="#e81adf" />
<rect x="828" y="952" width="6" height="14" fill="#000" />
<rect x="829" y="953" width="4" height="12" fill="#fff" />
<rect x="827" y="959" width="1" height="1" fill="#e81adf" />
<rect x="834" y="958" width="8" height="2" fill="url(#sqh)" />
<rect x="842" y="951" width="32" height="16" fill="#d23cd2" />
<rect x="843" y="952" width="30" height="14" fill="#ffd9ff" />
<rect x="845" y="954" width="26" height="10" fill="#fff" />
<rect x="845" y="954" width="8" height="10" fill="url(#gMi)" />
<rect x="845.5" y="954.5" width="25" height="9" fill="none" stroke="#c83ac8" stroke-width="1"/>
<path d="M849.6 959 L846 955.6 L846 962.4 Z" fill="#000" shape-rendering="geometricPrecision"/>
<rect x="1076" y="809" width="8" height="12" fill="#a29c2c" />
<rect x="1077" y="810" width="6" height="10" fill="#ffff9e" />
<path d="M1079 811h1v1h-1zM1080 811h1v1h-1zM1078 812h1v1h-1zM1081 812h1v1h-1zM1081 813h1v1h-1zM1080 814h1v1h-1zM1079 815h1v1h-1zM1079 817h1v1h-1z" fill="#8a8420" />
<rect x="1145" y="750" width="16" height="14" fill="#128a20" />
<rect x="1147.5" y="752.5" width="11" height="9" fill="#128a20" stroke="#fff" stroke-width="1"/>
<rect x="1162" y="757" width="1" height="1" fill="#1e8c1e" />
<rect x="1164" y="757" width="1" height="1" fill="#1e8c1e" />
<rect x="1166" y="757" width="1" height="1" fill="#1e8c1e" />
<rect x="1168" y="757" width="1" height="1" fill="#1e8c1e" />
<rect x="1169" y="748" width="208" height="19" fill="#1f7a26" />
<rect x="1170" y="749" width="206" height="17" fill="#fff" />
<path d="M1174 753 L1178.5 757 L1174 761 Z" fill="#1f8a26" shape-rendering="geometricPrecision"/>
<path d="M1184.5 752 L1189 756.5 L1187.6 756.5 L1187.6 761 L1185.4 761 L1185.4 758 L1183.6 758 L1183.6 761 L1181.4 761 L1181.4 756.5 L1180 756.5 Z" fill="#000" shape-rendering="geometricPrecision"/>
<rect x="1186" y="753" width="1" height="2" fill="#000" />
<g filter="url(#idf)">
<text x="928" y="45" font-family="Liberation Sans, sans-serif" font-size="12" font-weight="normal" fill="#000" text-anchor="start" textLength="48" lengthAdjust="spacingAndGlyphs"  stroke="#000" stroke-width="0.22">&quot;Manual&quot;</text>
<text x="936" y="75" font-family="Liberation Sans, sans-serif" font-size="12" font-weight="normal" fill="#000" text-anchor="start" textLength="57" lengthAdjust="spacingAndGlyphs"  stroke="#000" stroke-width="0.22">&quot;Add tests&quot;</text>
<text x="835" y="528" font-family="Liberation Sans, sans-serif" font-size="12" font-weight="normal" fill="#8c8c8c" text-anchor="start" textLength="13" lengthAdjust="spacingAndGlyphs"  stroke="#8c8c8c" stroke-width="0.22">[4]</text>
<text x="852" y="528" font-family="Liberation Sans, sans-serif" font-size="12" font-weight="normal" fill="#000" text-anchor="start" textLength="345" lengthAdjust="spacingAndGlyphs"  stroke="#000" stroke-width="0.22">&quot;Manual_AddTests_ScopeConf_ReadScopeConfig&quot;: Value Change</text>
<text x="1131" y="629" font-family="Liberation Sans, sans-serif" font-size="12" font-weight="normal" fill="#000" text-anchor="start" textLength="25" lengthAdjust="spacingAndGlyphs"  stroke="#000" stroke-width="0.22">False</text>
<text x="1374" y="656" font-family="Liberation Sans, sans-serif" font-size="12" font-weight="normal" fill="#000" text-anchor="start" textLength="43" lengthAdjust="spacingAndGlyphs"  stroke="#000" stroke-width="0.22">No Error</text>
<text x="55" y="28" font-family="Liberation Sans, sans-serif" font-size="12" font-weight="normal" fill="#000" text-anchor="start" textLength="102" lengthAdjust="spacingAndGlyphs"  stroke="#000" stroke-width="0.22">Tab Control Layer 1</text>
<text x="212" y="57" font-family="Liberation Sans, sans-serif" font-size="12" font-weight="normal" fill="#000" text-anchor="start" textLength="102" lengthAdjust="spacingAndGlyphs"  stroke="#000" stroke-width="0.22">Tab Control Layer 2</text>
<text x="51.5" y="98" font-family="Liberation Sans, sans-serif" font-size="12" font-weight="normal" fill="#000" text-anchor="middle" textLength="11" lengthAdjust="spacingAndGlyphs"  stroke="#000" stroke-width="0.22">10</text>
<text x="208.8" y="527.3" font-family="Liberation Sans, sans-serif" font-size="12" font-weight="normal" fill="#000" text-anchor="start" textLength="17.8" lengthAdjust="spacingAndGlyphs"  stroke="#000" stroke-width="0.22">100</text>
<text x="245" y="95" font-family="Liberation Sans, sans-serif" font-size="12" font-weight="normal" fill="#000" text-anchor="start" textLength="161" lengthAdjust="spacingAndGlyphs"  stroke="#000" stroke-width="0.22">Manual_AddTests_InputVector</text>
<text x="416" y="94" font-family="Liberation Serif, serif" font-size="8.6" font-weight="bold" fill="#c814c8" text-anchor="start" textLength="16.5" lengthAdjust="spacingAndGlyphs" stroke="#c814c8" stroke-width="0.35">abc</text>
<text x="222" y="119" font-family="Liberation Sans, sans-serif" font-size="12" font-weight="normal" fill="#000" text-anchor="start" textLength="185" lengthAdjust="spacingAndGlyphs"  stroke="#000" stroke-width="0.22">Manual_AddTests_InputVectorStart</text>
<text x="417" y="117" font-family="Liberation Sans, sans-serif" font-size="8" font-weight="bold" fill="#d2741c" text-anchor="start" textLength="15.5" lengthAdjust="spacingAndGlyphs" stroke="#d2741c" stroke-width="0.35">DBL</text>
<text x="221" y="138" font-family="Liberation Sans, sans-serif" font-size="12" font-weight="normal" fill="#000" text-anchor="start" textLength="185" lengthAdjust="spacingAndGlyphs"  stroke="#000" stroke-width="0.22">Manual_AddTests_InputVectorStop</text>
<text x="416" y="137" font-family="Liberation Sans, sans-serif" font-size="8" font-weight="bold" fill="#d2741c" text-anchor="start" textLength="15.5" lengthAdjust="spacingAndGlyphs" stroke="#d2741c" stroke-width="0.35">DBL</text>
<text x="193" y="157" font-family="Liberation Sans, sans-serif" font-size="12" font-weight="normal" fill="#000" text-anchor="start" textLength="214" lengthAdjust="spacingAndGlyphs"  stroke="#000" stroke-width="0.22">Manual_AddTests_InputVectorStepwidth</text>
<text x="417" y="156" font-family="Liberation Sans, sans-serif" font-size="8" font-weight="bold" fill="#d2741c" text-anchor="start" textLength="15.5" lengthAdjust="spacingAndGlyphs" stroke="#d2741c" stroke-width="0.35">DBL</text>
<text x="212" y="175" font-family="Liberation Sans, sans-serif" font-size="12" font-weight="normal" fill="#000" text-anchor="start" textLength="195" lengthAdjust="spacingAndGlyphs"  stroke="#000" stroke-width="0.22">Manual_AddTests_InputVectorDeltaT</text>
<text x="417" y="174" font-family="Liberation Sans, sans-serif" font-size="8" font-weight="bold" fill="#d2741c" text-anchor="start" textLength="15.5" lengthAdjust="spacingAndGlyphs" stroke="#d2741c" stroke-width="0.35">DBL</text>
<text x="223" y="210" font-family="Liberation Sans, sans-serif" font-size="12" font-weight="normal" fill="#000" text-anchor="start" textLength="184" lengthAdjust="spacingAndGlyphs"  stroke="#000" stroke-width="0.22">Manual_AddTests_Test Description</text>
<text x="417" y="209" font-family="Liberation Serif, serif" font-size="8.6" font-weight="bold" fill="#c814c8" text-anchor="start" textLength="16.5" lengthAdjust="spacingAndGlyphs" stroke="#c814c8" stroke-width="0.35">abc</text>
<text x="226" y="233" font-family="Liberation Sans, sans-serif" font-size="12" font-weight="normal" fill="#000" text-anchor="start" textLength="179" lengthAdjust="spacingAndGlyphs"  stroke="#000" stroke-width="0.22">Manual_AddTests_Parametertable</text>
<text x="414.5" y="232" font-family="Liberation Serif, serif" font-size="8.6" font-weight="bold" fill="#c814c8" text-anchor="start" textLength="15" lengthAdjust="spacingAndGlyphs" stroke="#c814c8" stroke-width="0.35">abc</text>
<text x="272" y="253" font-family="Liberation Sans, sans-serif" font-size="12" font-weight="normal" fill="#000" text-anchor="start" textLength="132" lengthAdjust="spacingAndGlyphs"  stroke="#000" stroke-width="0.22">Manual_AddTests_Delete</text>
<text x="416" y="252" font-family="Liberation Sans, sans-serif" font-size="8.5" font-weight="bold" fill="#086c10" text-anchor="start" textLength="12.5" lengthAdjust="spacingAndGlyphs" stroke="#086c10" stroke-width="0.35">TF</text>
<text x="595" y="94" font-family="Liberation Sans, sans-serif" font-size="12" font-weight="normal" fill="#000" text-anchor="start" textLength="123" lengthAdjust="spacingAndGlyphs"  stroke="#000" stroke-width="0.22">Manual_AddTests_Save</text>
<text x="730" y="92" font-family="Liberation Sans, sans-serif" font-size="8.5" font-weight="bold" fill="#086c10" text-anchor="start" textLength="12.5" lengthAdjust="spacingAndGlyphs" stroke="#086c10" stroke-width="0.35">TF</text>
<text x="593" y="111" font-family="Liberation Sans, sans-serif" font-size="12" font-weight="normal" fill="#000" text-anchor="start" textLength="125" lengthAdjust="spacingAndGlyphs"  stroke="#000" stroke-width="0.22">Manual_AddTests_Load</text>
<text x="730" y="109" font-family="Liberation Sans, sans-serif" font-size="8.5" font-weight="bold" fill="#086c10" text-anchor="start" textLength="12.5" lengthAdjust="spacingAndGlyphs" stroke="#086c10" stroke-width="0.35">TF</text>
<text x="591" y="128" font-family="Liberation Sans, sans-serif" font-size="12" font-weight="normal" fill="#000" text-anchor="start" textLength="127" lengthAdjust="spacingAndGlyphs"  stroke="#000" stroke-width="0.22">Manual_AddTests_Reset</text>
<text x="730" y="127" font-family="Liberation Sans, sans-serif" font-size="8.5" font-weight="bold" fill="#086c10" text-anchor="start" textLength="12.5" lengthAdjust="spacingAndGlyphs" stroke="#086c10" stroke-width="0.35">TF</text>
<text x="462" y="159" font-family="Liberation Sans, sans-serif" font-size="12" font-weight="normal" fill="#000" text-anchor="start" textLength="256" lengthAdjust="spacingAndGlyphs"  stroke="#000" stroke-width="0.22">Manual_AddTests_ScopeConf_ReadScopeConfig</text>
<text x="730" y="157" font-family="Liberation Sans, sans-serif" font-size="8.5" font-weight="bold" fill="#086c10" text-anchor="start" textLength="12.5" lengthAdjust="spacingAndGlyphs" stroke="#086c10" stroke-width="0.35">TF</text>
<text x="535" y="174" font-family="Liberation Sans, sans-serif" font-size="12" font-weight="normal" fill="#000" text-anchor="start" textLength="183" lengthAdjust="spacingAndGlyphs"  stroke="#000" stroke-width="0.22">Manual_AddTests_ScopeConfigOK</text>
<text x="730" y="173" font-family="Liberation Sans, sans-serif" font-size="8.5" font-weight="bold" fill="#086c10" text-anchor="start" textLength="12.5" lengthAdjust="spacingAndGlyphs" stroke="#086c10" stroke-width="0.35">TF</text>
<text x="567" y="203" font-family="Liberation Sans, sans-serif" font-size="12" font-weight="normal" fill="#000" text-anchor="start" textLength="151" lengthAdjust="spacingAndGlyphs"  stroke="#000" stroke-width="0.22">Manual_AddTests_Testname</text>
<text x="728" y="201" font-family="Liberation Serif, serif" font-size="8.6" font-weight="bold" fill="#c814c8" text-anchor="start" textLength="16.5" lengthAdjust="spacingAndGlyphs" stroke="#c814c8" stroke-width="0.35">abc</text>
<text x="585" y="220" font-family="Liberation Sans, sans-serif" font-size="12" font-weight="normal" fill="#000" text-anchor="start" textLength="132" lengthAdjust="spacingAndGlyphs"  stroke="#000" stroke-width="0.22">Manual_AddTests_TestID</text>
<text x="727" y="218" font-family="Liberation Serif, serif" font-size="9" font-weight="bold" fill="#0808b8" text-anchor="start" textLength="16" lengthAdjust="spacingAndGlyphs"  stroke="#0808b8" stroke-width="0.22">I32</text>
<text x="562" y="244" font-family="Liberation Sans, sans-serif" font-size="12" font-weight="normal" fill="#000" text-anchor="start" textLength="156" lengthAdjust="spacingAndGlyphs"  stroke="#000" stroke-width="0.22">Manual_AddTests_GenerateID</text>
<text x="731" y="243" font-family="Liberation Sans, sans-serif" font-size="8.5" font-weight="bold" fill="#086c10" text-anchor="start" textLength="12.5" lengthAdjust="spacingAndGlyphs" stroke="#086c10" stroke-width="0.35">TF</text>
<text x="281" y="731" font-family="Liberation Sans, sans-serif" font-size="12" font-weight="normal" fill="#d92bd9" text-anchor="start" textLength="150" lengthAdjust="spacingAndGlyphs"  stroke="#d92bd9" stroke-width="0.22">Manual_AddTests_Testname</text>
<text x="456" y="730" font-family="Liberation Sans, sans-serif" font-size="10.5" font-weight="normal" fill="#fff" text-anchor="start" textLength="14.5" lengthAdjust="spacingAndGlyphs" stroke="#fff" stroke-width="0.12">abc</text>
<text x="463.5" y="856" font-family="Liberation Serif, serif" font-size="13" font-weight="bold" fill="#e628e6" text-anchor="start" textLength="12" lengthAdjust="spacingAndGlyphs"  stroke="#e628e6" stroke-width="0.22">“””</text>
<text x="578.5" y="649" font-family="Liberation Sans, sans-serif" font-size="12" font-weight="normal" fill="#872a86" text-anchor="start" textLength="151" lengthAdjust="spacingAndGlyphs"  stroke="#872a86" stroke-width="0.22">VISAResourceName_Scope_1</text>
<text x="588" y="702" font-family="Liberation Sans, sans-serif" font-size="12" font-weight="normal" fill="#000" text-anchor="start" textLength="47.5" lengthAdjust="spacingAndGlyphs"  stroke="#000" stroke-width="0.22">:CHAN1?</text>
<text x="811" y="700" font-family="Liberation Sans, sans-serif" font-size="10.5" font-weight="normal" fill="#fff" text-anchor="start" textLength="14.5" lengthAdjust="spacingAndGlyphs" stroke="#fff" stroke-width="0.12">abc</text>
<text x="850.5" y="700" font-family="Liberation Serif, serif" font-size="8.8" font-weight="bold" fill="#d41cd4" text-anchor="start" textLength="15.5" lengthAdjust="spacingAndGlyphs" stroke="#d41cd4" stroke-width="0.3">abc</text>
<text x="843.5" y="685" font-family="Liberation Sans, sans-serif" font-size="12" font-weight="normal" fill="#000" text-anchor="start" textLength="189.5" lengthAdjust="spacingAndGlyphs"  stroke="#000" stroke-width="0.22">Manual_AddTests_Channel 1 Config</text>
<text x="586" y="782" font-family="Liberation Sans, sans-serif" font-size="12" font-weight="normal" fill="#000" text-anchor="start" textLength="47.5" lengthAdjust="spacingAndGlyphs"  stroke="#000" stroke-width="0.22">:CHAN2?</text>
<text x="811" y="782" font-family="Liberation Sans, sans-serif" font-size="10.5" font-weight="normal" fill="#fff" text-anchor="start" textLength="14.5" lengthAdjust="spacingAndGlyphs" stroke="#fff" stroke-width="0.12">abc</text>
<text x="850.5" y="782" font-family="Liberation Serif, serif" font-size="8.8" font-weight="bold" fill="#d41cd4" text-anchor="start" textLength="15.5" lengthAdjust="spacingAndGlyphs" stroke="#d41cd4" stroke-width="0.3">abc</text>
<text x="843.5" y="767" font-family="Liberation Sans, sans-serif" font-size="12" font-weight="normal" fill="#000" text-anchor="start" textLength="189.5" lengthAdjust="spacingAndGlyphs"  stroke="#000" stroke-width="0.22">Manual_AddTests_Channel 2 Config</text>
<text x="584" y="869" font-family="Liberation Sans, sans-serif" font-size="12" font-weight="normal" fill="#000" text-anchor="start" textLength="47.5" lengthAdjust="spacingAndGlyphs"  stroke="#000" stroke-width="0.22">:CHAN3?</text>
<text x="811" y="871" font-family="Liberation Sans, sans-serif" font-size="10.5" font-weight="normal" fill="#fff" text-anchor="start" textLength="14.5" lengthAdjust="spacingAndGlyphs" stroke="#fff" stroke-width="0.12">abc</text>
<text x="850.5" y="869" font-family="Liberation Serif, serif" font-size="8.8" font-weight="bold" fill="#d41cd4" text-anchor="start" textLength="15.5" lengthAdjust="spacingAndGlyphs" stroke="#d41cd4" stroke-width="0.3">abc</text>
<text x="843.5" y="854" font-family="Liberation Sans, sans-serif" font-size="12" font-weight="normal" fill="#000" text-anchor="start" textLength="189.5" lengthAdjust="spacingAndGlyphs"  stroke="#000" stroke-width="0.22">Manual_AddTests_Channel 3 Config</text>
<text x="589" y="964" font-family="Liberation Sans, sans-serif" font-size="12" font-weight="normal" fill="#000" text-anchor="start" textLength="47.5" lengthAdjust="spacingAndGlyphs"  stroke="#000" stroke-width="0.22">:CHAN4?</text>
<text x="811" y="963" font-family="Liberation Sans, sans-serif" font-size="10.5" font-weight="normal" fill="#fff" text-anchor="start" textLength="14.5" lengthAdjust="spacingAndGlyphs" stroke="#fff" stroke-width="0.12">abc</text>
<text x="850.5" y="962" font-family="Liberation Serif, serif" font-size="8.8" font-weight="bold" fill="#d41cd4" text-anchor="start" textLength="15.5" lengthAdjust="spacingAndGlyphs" stroke="#d41cd4" stroke-width="0.3">abc</text>
<text x="843.5" y="947" font-family="Liberation Sans, sans-serif" font-size="12" font-weight="normal" fill="#000" text-anchor="start" textLength="189.5" lengthAdjust="spacingAndGlyphs"  stroke="#000" stroke-width="0.22">Manual_AddTests_Channel 4 Config</text>
<text x="1153" y="761" font-family="Liberation Sans, sans-serif" font-size="8.5" font-weight="bold" fill="#fff" text-anchor="middle"  stroke="#fff" stroke-width="0.22">T</text>
<text x="1189.5" y="762" font-family="Liberation Sans, sans-serif" font-size="12" font-weight="normal" fill="#2f9a36" text-anchor="start" textLength="182.5" lengthAdjust="spacingAndGlyphs"  stroke="#2f9a36" stroke-width="0.22">Manual_AddTests_ScopeConfigOK</text>
</g>
</svg>
</body></html>
